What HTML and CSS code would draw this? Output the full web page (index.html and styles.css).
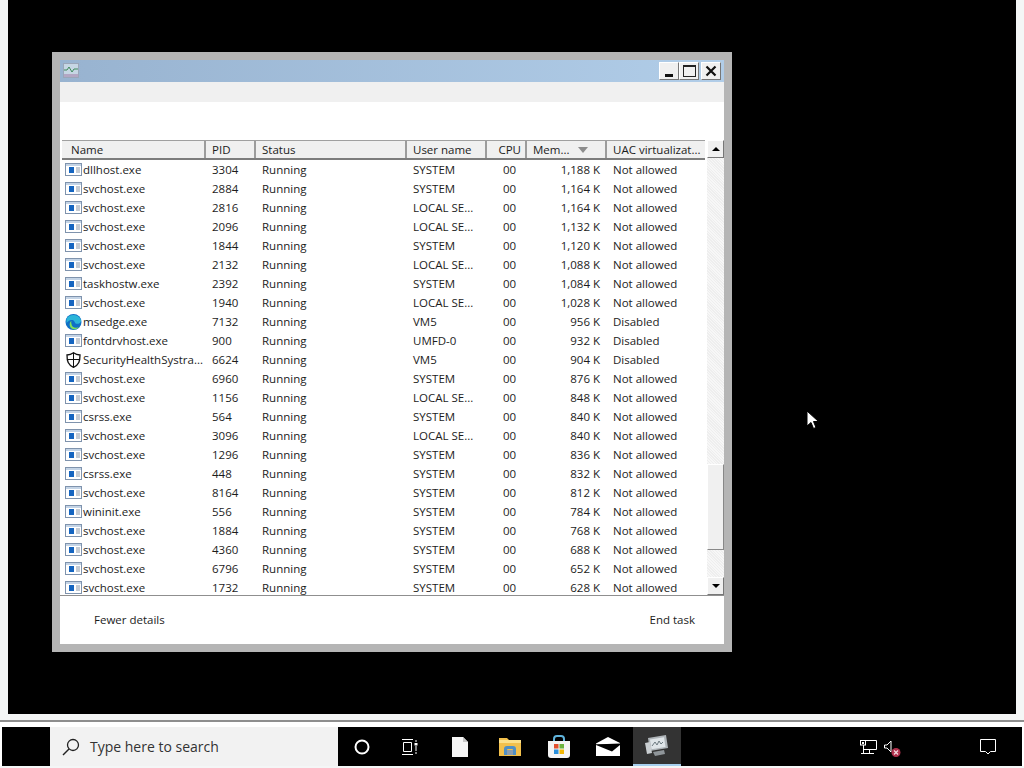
FILE: index.html
```html
<!DOCTYPE html>
<html lang="en">
<head>
    <meta charset="UTF-8">
    <title>Task Manager</title>
    <link rel="stylesheet" href="styles.css">
</head>
<body>
    <svg class="icon-defs" width="0" height="0">
        <symbol id="exe" viewBox="0 0 17 13">
            <rect x="0.5" y="0.5" width="16" height="12" fill="#fff" stroke="#7f93ad"/>
            <rect x="1" y="1" width="15" height="2" fill="#c4d4e6"/>
            <rect x="4" y="4" width="5" height="6" fill="#1565c0"/>
            <path d="M11 5h4M11 7h4M11 9h4" stroke="#8a97a8"/>
        </symbol>
    </svg>

    <div class="desktop">
        <div class="window">
            <div class="title-bar">
                <svg class="title-icon" width="16" height="15" viewBox="0 0 16 15">
                    <rect x="0.5" y="0.5" width="15" height="14" fill="#c6d6e4" stroke="#9aa6b8"/>
                    <path d="M1 7h3l2-3 3 5 2-3h4" fill="none" stroke="#3d8a5a"/>
                    <rect x="1" y="11" width="14" height="3" fill="#b3a7c4"/>
                </svg>
                <div class="win-buttons">
                    <div class="win-btn"><span class="min-mark"></span></div>
                    <div class="win-btn"><span class="max-mark"></span></div>
                    <div class="win-btn close-btn">
                        <svg width="12" height="12" viewBox="0 0 12 12"><path d="M1.500 1.500l9 9M10.500 1.500l-9 9" stroke="#111" stroke-width="2.200"/></svg>
                    </div>
                </div>
            </div>
            <div class="menu-bar"></div>
            <div class="tab-strip"></div>

            <div class="list-area">
                <div class="list-main">
                    <div class="list-header">
                        <div class="col-head head-name">Name</div>
                        <div class="col-head">PID</div>
                        <div class="col-head">Status</div>
                        <div class="col-head">User name</div>
                        <div class="col-head head-cpu">CPU</div>
                        <div class="col-head head-mem">Mem...
                            <svg class="sort-arrow" width="10" height="6" viewBox="0 0 10 6"><path d="M0 0h10L5 6z" fill="#8d8d8d"/></svg>
                        </div>
                        <div class="col-head">UAC virtualizat...</div>
                    </div>
                    <div class="rows">
                        <div class="row"><div class="cell-name"><svg class="app-icon"><use href="#exe"/></svg>dllhost.exe</div><div>3304</div><div>Running</div><div>SYSTEM</div><div class="cell-cpu">00</div><div class="cell-mem">1,188 K</div><div>Not allowed</div></div>
                        <div class="row"><div class="cell-name"><svg class="app-icon"><use href="#exe"/></svg>svchost.exe</div><div>2884</div><div>Running</div><div>SYSTEM</div><div class="cell-cpu">00</div><div class="cell-mem">1,164 K</div><div>Not allowed</div></div>
                        <div class="row"><div class="cell-name"><svg class="app-icon"><use href="#exe"/></svg>svchost.exe</div><div>2816</div><div>Running</div><div>LOCAL SE...</div><div class="cell-cpu">00</div><div class="cell-mem">1,164 K</div><div>Not allowed</div></div>
                        <div class="row"><div class="cell-name"><svg class="app-icon"><use href="#exe"/></svg>svchost.exe</div><div>2096</div><div>Running</div><div>LOCAL SE...</div><div class="cell-cpu">00</div><div class="cell-mem">1,132 K</div><div>Not allowed</div></div>
                        <div class="row"><div class="cell-name"><svg class="app-icon"><use href="#exe"/></svg>svchost.exe</div><div>1844</div><div>Running</div><div>SYSTEM</div><div class="cell-cpu">00</div><div class="cell-mem">1,120 K</div><div>Not allowed</div></div>
                        <div class="row"><div class="cell-name"><svg class="app-icon"><use href="#exe"/></svg>svchost.exe</div><div>2132</div><div>Running</div><div>LOCAL SE...</div><div class="cell-cpu">00</div><div class="cell-mem">1,088 K</div><div>Not allowed</div></div>
                        <div class="row"><div class="cell-name"><svg class="app-icon"><use href="#exe"/></svg>taskhostw.exe</div><div>2392</div><div>Running</div><div>SYSTEM</div><div class="cell-cpu">00</div><div class="cell-mem">1,084 K</div><div>Not allowed</div></div>
                        <div class="row"><div class="cell-name"><svg class="app-icon"><use href="#exe"/></svg>svchost.exe</div><div>1940</div><div>Running</div><div>LOCAL SE...</div><div class="cell-cpu">00</div><div class="cell-mem">1,028 K</div><div>Not allowed</div></div>
                        <div class="row">
                            <div class="cell-name">
                                <svg class="app-icon big-icon" viewBox="0 0 17 16">
                                    <circle cx="8.500" cy="8" r="8" fill="#0f6fc6"/>
                                    <path d="M1.500 5C3.500 0 13.500-1 16 6c.6 3-3 4.500-5.500 3.500C9.500 8 9.500 6.500 7.500 6 4.500 5.500 3 7 1.500 9z" fill="#2bb5d8"/>
                                    <path d="M6.500 10c0 3 4 5 7.500 3-2.500 3-6.500 3-8.500.5C4 11 4.500 8 6.500 7c-.5 1-.5 2 0 3z" fill="#7fe05a"/>
                                </svg>msedge.exe
                            </div>
                            <div>7132</div><div>Running</div><div>VM5</div><div class="cell-cpu">00</div><div class="cell-mem">956 K</div><div>Disabled</div>
                        </div>
                        <div class="row"><div class="cell-name"><svg class="app-icon"><use href="#exe"/></svg>fontdrvhost.exe</div><div>900</div><div>Running</div><div>UMFD-0</div><div class="cell-cpu">00</div><div class="cell-mem">932 K</div><div>Disabled</div></div>
                        <div class="row">
                            <div class="cell-name">
                                <svg class="app-icon big-icon" viewBox="0 0 17 16">
                                    <path d="M8.500.7C6.500 2.300 4.500 3 2 3c0 6 1 10 6.500 12.300C14 13 15 9 15 3 12.500 3 10.500 2.300 8.500.7z" fill="#fff" stroke="#111" stroke-width="1.300"/>
                                    <path d="M8.500 1v14M2.500 7.500h12" stroke="#111"/>
                                </svg>SecurityHealthSystra...
                            </div>
                            <div>6624</div><div>Running</div><div>VM5</div><div class="cell-cpu">00</div><div class="cell-mem">904 K</div><div>Disabled</div>
                        </div>
                        <div class="row"><div class="cell-name"><svg class="app-icon"><use href="#exe"/></svg>svchost.exe</div><div>6960</div><div>Running</div><div>SYSTEM</div><div class="cell-cpu">00</div><div class="cell-mem">876 K</div><div>Not allowed</div></div>
                        <div class="row"><div class="cell-name"><svg class="app-icon"><use href="#exe"/></svg>svchost.exe</div><div>1156</div><div>Running</div><div>LOCAL SE...</div><div class="cell-cpu">00</div><div class="cell-mem">848 K</div><div>Not allowed</div></div>
                        <div class="row"><div class="cell-name"><svg class="app-icon"><use href="#exe"/></svg>csrss.exe</div><div>564</div><div>Running</div><div>SYSTEM</div><div class="cell-cpu">00</div><div class="cell-mem">840 K</div><div>Not allowed</div></div>
                        <div class="row"><div class="cell-name"><svg class="app-icon"><use href="#exe"/></svg>svchost.exe</div><div>3096</div><div>Running</div><div>LOCAL SE...</div><div class="cell-cpu">00</div><div class="cell-mem">840 K</div><div>Not allowed</div></div>
                        <div class="row"><div class="cell-name"><svg class="app-icon"><use href="#exe"/></svg>svchost.exe</div><div>1296</div><div>Running</div><div>SYSTEM</div><div class="cell-cpu">00</div><div class="cell-mem">836 K</div><div>Not allowed</div></div>
                        <div class="row"><div class="cell-name"><svg class="app-icon"><use href="#exe"/></svg>csrss.exe</div><div>448</div><div>Running</div><div>SYSTEM</div><div class="cell-cpu">00</div><div class="cell-mem">832 K</div><div>Not allowed</div></div>
                        <div class="row"><div class="cell-name"><svg class="app-icon"><use href="#exe"/></svg>svchost.exe</div><div>8164</div><div>Running</div><div>SYSTEM</div><div class="cell-cpu">00</div><div class="cell-mem">812 K</div><div>Not allowed</div></div>
                        <div class="row"><div class="cell-name"><svg class="app-icon"><use href="#exe"/></svg>wininit.exe</div><div>556</div><div>Running</div><div>SYSTEM</div><div class="cell-cpu">00</div><div class="cell-mem">784 K</div><div>Not allowed</div></div>
                        <div class="row"><div class="cell-name"><svg class="app-icon"><use href="#exe"/></svg>svchost.exe</div><div>1884</div><div>Running</div><div>SYSTEM</div><div class="cell-cpu">00</div><div class="cell-mem">768 K</div><div>Not allowed</div></div>
                        <div class="row"><div class="cell-name"><svg class="app-icon"><use href="#exe"/></svg>svchost.exe</div><div>4360</div><div>Running</div><div>SYSTEM</div><div class="cell-cpu">00</div><div class="cell-mem">688 K</div><div>Not allowed</div></div>
                        <div class="row"><div class="cell-name"><svg class="app-icon"><use href="#exe"/></svg>svchost.exe</div><div>6796</div><div>Running</div><div>SYSTEM</div><div class="cell-cpu">00</div><div class="cell-mem">652 K</div><div>Not allowed</div></div>
                        <div class="row"><div class="cell-name"><svg class="app-icon"><use href="#exe"/></svg>svchost.exe</div><div>1732</div><div>Running</div><div>SYSTEM</div><div class="cell-cpu">00</div><div class="cell-mem">628 K</div><div>Not allowed</div></div>
                    </div>
                </div>
                <div class="scrollbar">
                    <div class="scroll-btn"><span class="arrow-up"></span></div>
                    <div class="scroll-track"><div class="scroll-thumb"></div></div>
                    <div class="scroll-btn"><span class="arrow-down"></span></div>
                </div>
            </div>

            <div class="footer">
                <span>Fewer details</span>
                <span>End task</span>
            </div>
        </div>

        <svg class="cursor" width="13" height="20" viewBox="0 0 13 20">
            <path d="M1 1v15l4-3.500 2.500 6 2.500-1-2.500-6H12.500z" fill="#fff" stroke="#000"/>
        </svg>
    </div>

    <div class="taskbar">
        <div class="start-area"></div>
        <div class="search-box">
            <svg width="20" height="20" viewBox="0 0 20 20"><circle cx="12" cy="8" r="5.500" fill="none" stroke="#222" stroke-width="1.300"/><path d="M8 12l-6 6" stroke="#222" stroke-width="1.500"/></svg>
            <span>Type here to search</span>
        </div>
        <div class="task-btn btn-cortana">
            <svg width="18" height="18" viewBox="0 0 18 18"><circle cx="9" cy="9" r="6.500" fill="none" stroke="#fff" stroke-width="2"/></svg>
        </div>
        <div class="task-btn btn-view">
            <svg width="18" height="16" viewBox="0 0 18 16"><path d="M1 .5h11M1 15.500h11M2.500 3.500h8v9h-8z" fill="none" stroke="#fff"/><path d="M15 1v2M15 13v2M15 7v5" stroke="#fff"/><rect x="13.500" y="4" width="3" height="2.500" fill="#fff"/></svg>
        </div>
        <div class="task-btn btn-doc">
            <svg width="16" height="20" viewBox="0 0 16 20"><path d="M0 0h11l5 5v15H0z" fill="#f6f6f6"/><path d="M11 0v5h5z" fill="#c8c8c8"/></svg>
        </div>
        <div class="task-btn">
            <svg width="22" height="19" viewBox="0 0 22 19"><path d="M0 1h8l2 2h12v16H0z" fill="#f2c04c"/><path d="M0 3h22v3H0z" fill="#fbe08a"/><path d="M5 18v-6q0-3 3-3h6q3 0 3 3v6h-3v-5q0-1-1-1H9q-1 0-1 1v5z" fill="#4f8fc4"/><rect x="8" y="13" width="6" height="5" fill="#8a9db0"/></svg>
        </div>
        <div class="task-btn">
            <svg width="24" height="24" viewBox="0 0 24 24"><path d="M7 7V4q0-3 3-3h4q3 0 3 3v3" fill="none" stroke="#5fb3dc" stroke-width="2"/><path d="M1 6h22v14q0 3-3 3H4q-3 0-3-3z" fill="#f4f4f4"/><rect x="7" y="9" width="4.500" height="4.500" fill="#e2502f"/><rect x="12.500" y="9" width="4.500" height="4.500" fill="#6cb33f"/><rect x="7" y="14.500" width="4.500" height="4.500" fill="#2a8fdc"/><rect x="12.500" y="14.500" width="4.500" height="4.500" fill="#f2b705"/></svg>
        </div>
        <div class="task-btn btn-mail">
            <svg width="24" height="19" viewBox="0 0 24 19"><path d="M0 6.500L12 0l12 6V19H0z" fill="#fff"/><path d="M11 7l13-.5V8l-8 6.500L0 8V7.300z" fill="#000"/></svg>
        </div>
        <div class="task-btn task-active">
            <svg width="24" height="22" viewBox="0 0 24 22"><path d="M3 3l18-3 2 13-18 3z" fill="#aeb4b8"/><path d="M5 4.500l14-2.300 1.500 9.800-14 2.300z" fill="#dfe5e8"/><path d="M7 11l3-4 2 3 2-4 2 3 2-2" fill="none" stroke="#6d7a80"/><path d="M0 8l5-1 2 11-5 1z" fill="#c9ced1"/><path d="M8 17l11-2 1 4-10 2z" fill="#8f9599"/></svg>
        </div>
        <div class="tray">
            <svg class="tray-net" width="17" height="14" viewBox="0 0 17 14"><path d="M3.500.5h13v9h-13M3.500 4v9.500M1 13.500h13M9.500 9.500v4" fill="none" stroke="#fff"/><rect x="0.500" y="0.500" width="5" height="4.500" fill="#000" stroke="#fff"/><rect x="2" y="2" width="2" height="2" fill="#fff"/></svg>
            <svg class="tray-vol" width="18" height="18" viewBox="0 0 18 18"><path d="M.5 5h2.500l4-4v11l-4-4H.5z" fill="none" stroke="#fff"/><circle cx="12" cy="12.500" r="4.500" fill="#b0304c"/><path d="M10 10.500l4 4M14 10.500l-4 4" stroke="#f3d6dc" stroke-width="1.300"/></svg>
            <svg class="tray-note" width="16" height="16" viewBox="0 0 16 16"><path d="M.5.500h15v12h-5L8 15l-2.500-2.500h-5z" fill="none" stroke="#fff"/></svg>
        </div>
    </div>
</body>
</html>
```

FILE: styles.css
```css
body {
    margin: 0;
    width: 1024px;
    height: 768px;
    overflow: hidden;
    background-color: #f4f6f6;
    font-family: "Open Sans", "Liberation Sans", sans-serif;
    font-size: 11.5px;
    color: #1c1c1c;
}

.icon-defs {
    display: block;
}

/* desktop */

.desktop {
    position: relative;
    box-sizing: border-box;
    width: 1008px;
    height: 714px;
    margin-left: 8px;
    padding: 52px 0 0 44px;
    background-color: #000;
}

.cursor {
    position: absolute;
    left: 798px;
    top: 410px;
}

/* window */

.window {
    box-sizing: border-box;
    width: 680px;
    height: 600px;
    border: 8px solid #b5b5b5;
    background-color: #fff;
    display: flex;
    flex-direction: column;
}

.title-bar {
    height: 22px;
    display: flex;
    align-items: center;
    justify-content: space-between;
    padding: 0 3px 0 3px;
    background: linear-gradient(to right, #98b3d0, #b1cde8);
}

.title-icon {
    margin-top: -2px;
}

.win-buttons {
    display: flex;
    align-items: center;
    margin-top: -1px;
}

.win-btn {
    box-sizing: border-box;
    width: 20px;
    height: 18px;
    display: flex;
    align-items: center;
    justify-content: center;
    background-color: #f0f0f0;
    border: 1px solid;
    border-color: #fff #777 #777 #fff;
}

.close-btn {
    margin-left: 2px;
}

.min-mark {
    width: 8px;
    height: 3px;
    margin-top: 9px;
    background-color: #111;
}

.max-mark {
    box-sizing: border-box;
    width: 13px;
    height: 12px;
    border: 1px solid #222;
    border-top-width: 2px;
}

.menu-bar {
    height: 20px;
    background-color: #f0f0f0;
}

.tab-strip {
    height: 38px;
}

/* process list */

.list-area {
    height: 455px;
    display: flex;
    padding-left: 2px;
    border-bottom: 1px solid #8f8f8f;
}

.list-main {
    width: 643px;
    margin-right: 2px;
}

.list-header,
.row {
    display: grid;
    grid-template-columns: 144px 50px 151px 80px 40px 80px 98px;
}

.list-header {
    height: 20px;
    box-sizing: border-box;
    border-top: 1px solid #a0a0a0;
    border-bottom: 2px solid #7d7d7d;
    background-color: #f0f0f0;
}

.col-head {
    padding: 1px 6px 0;
    line-height: 16px;
    border-right: 2px solid #9c9c9c;
    white-space: nowrap;
}

.col-head:last-child {
    border-right: none;
}

.head-name {
    padding-left: 9px;
}

.head-cpu {
    text-align: right;
    padding-right: 4px;
}

.head-mem {
    position: relative;
}

.sort-arrow {
    position: absolute;
    left: 51px;
    top: 6px;
}

.rows {
    height: 435px;
    overflow: hidden;
}

.row {
    height: 19px;
    line-height: 19px;
    white-space: nowrap;
}

.row > div {
    padding-left: 6px;
}

.row > .cell-name {
    display: flex;
    align-items: center;
    padding-left: 3px;
}

.app-icon {
    width: 17px;
    height: 13px;
    margin-right: 1px;
    flex-shrink: 0;
}

.big-icon {
    height: 16px;
}

.row > .cell-cpu {
    padding-left: 16px;
}

.row > .cell-mem {
    padding: 0 7px 0 0;
    text-align: right;
}

/* scrollbar */

.scrollbar {
    width: 17px;
    display: flex;
    flex-direction: column;
    background-color: #f4f4f4;
    background-image: repeating-linear-gradient(45deg, #f7f7f7 0 1px, #eeeeee 1px 2px);
}

.scroll-btn {
    box-sizing: border-box;
    height: 18px;
    display: flex;
    align-items: center;
    justify-content: center;
    background-color: #f0f0f0;
    border: 1px solid;
    border-color: #fff #777 #777 #fff;
}

.arrow-up,
.arrow-down {
    width: 0;
    height: 0;
    border-left: 4px solid transparent;
    border-right: 4px solid transparent;
}

.arrow-up {
    border-bottom: 4px solid #000;
}

.arrow-down {
    border-top: 4px solid #000;
}

.scroll-track {
    flex-grow: 1;
    padding-top: 306px;
}

.scroll-thumb {
    box-sizing: border-box;
    height: 86px;
    background-color: #f0f0f0;
    border: 1px solid;
    border-color: #fff #888 #888 #fff;
}

.footer {
    flex-grow: 1;
    display: flex;
    justify-content: space-between;
    padding: 15px 29px 0 34px;
    line-height: 17px;
}

/* taskbar */

.taskbar {
    box-sizing: border-box;
    height: 46px;
    margin-top: 6px;
    padding: 5px 2px 2px;
    display: flex;
    border-top: 2px solid #8e8e8e;
    background-color: #fff;
}

.taskbar > div {
    height: 39px;
}

.start-area {
    width: 48px;
    background-color: #000;
}

.search-box {
    box-sizing: border-box;
    width: 288px;
    display: flex;
    align-items: center;
    gap: 9px;
    padding-left: 11px;
    background-color: #f2f2f2;
    font-size: 14px;
    color: #333;
}

.task-btn {
    box-sizing: border-box;
    width: 49px;
    display: flex;
    align-items: center;
    justify-content: center;
    background-color: #000;
}

.btn-cortana,
.btn-view {
    width: 48px;
}

.btn-doc {
    width: 51px;
}

.btn-mail {
    width: 50px;
}

.task-active {
    width: 48px;
    background-color: #333;
    border-bottom: 2px solid #a6cfee;
}

.tray {
    flex-grow: 1;
    display: flex;
    align-items: center;
    background-color: #000;
    padding-left: 179px;
}

.tray-vol {
    margin-left: 7px;
    margin-top: 4px;
}

.tray-note {
    margin-left: 78px;
}
```
